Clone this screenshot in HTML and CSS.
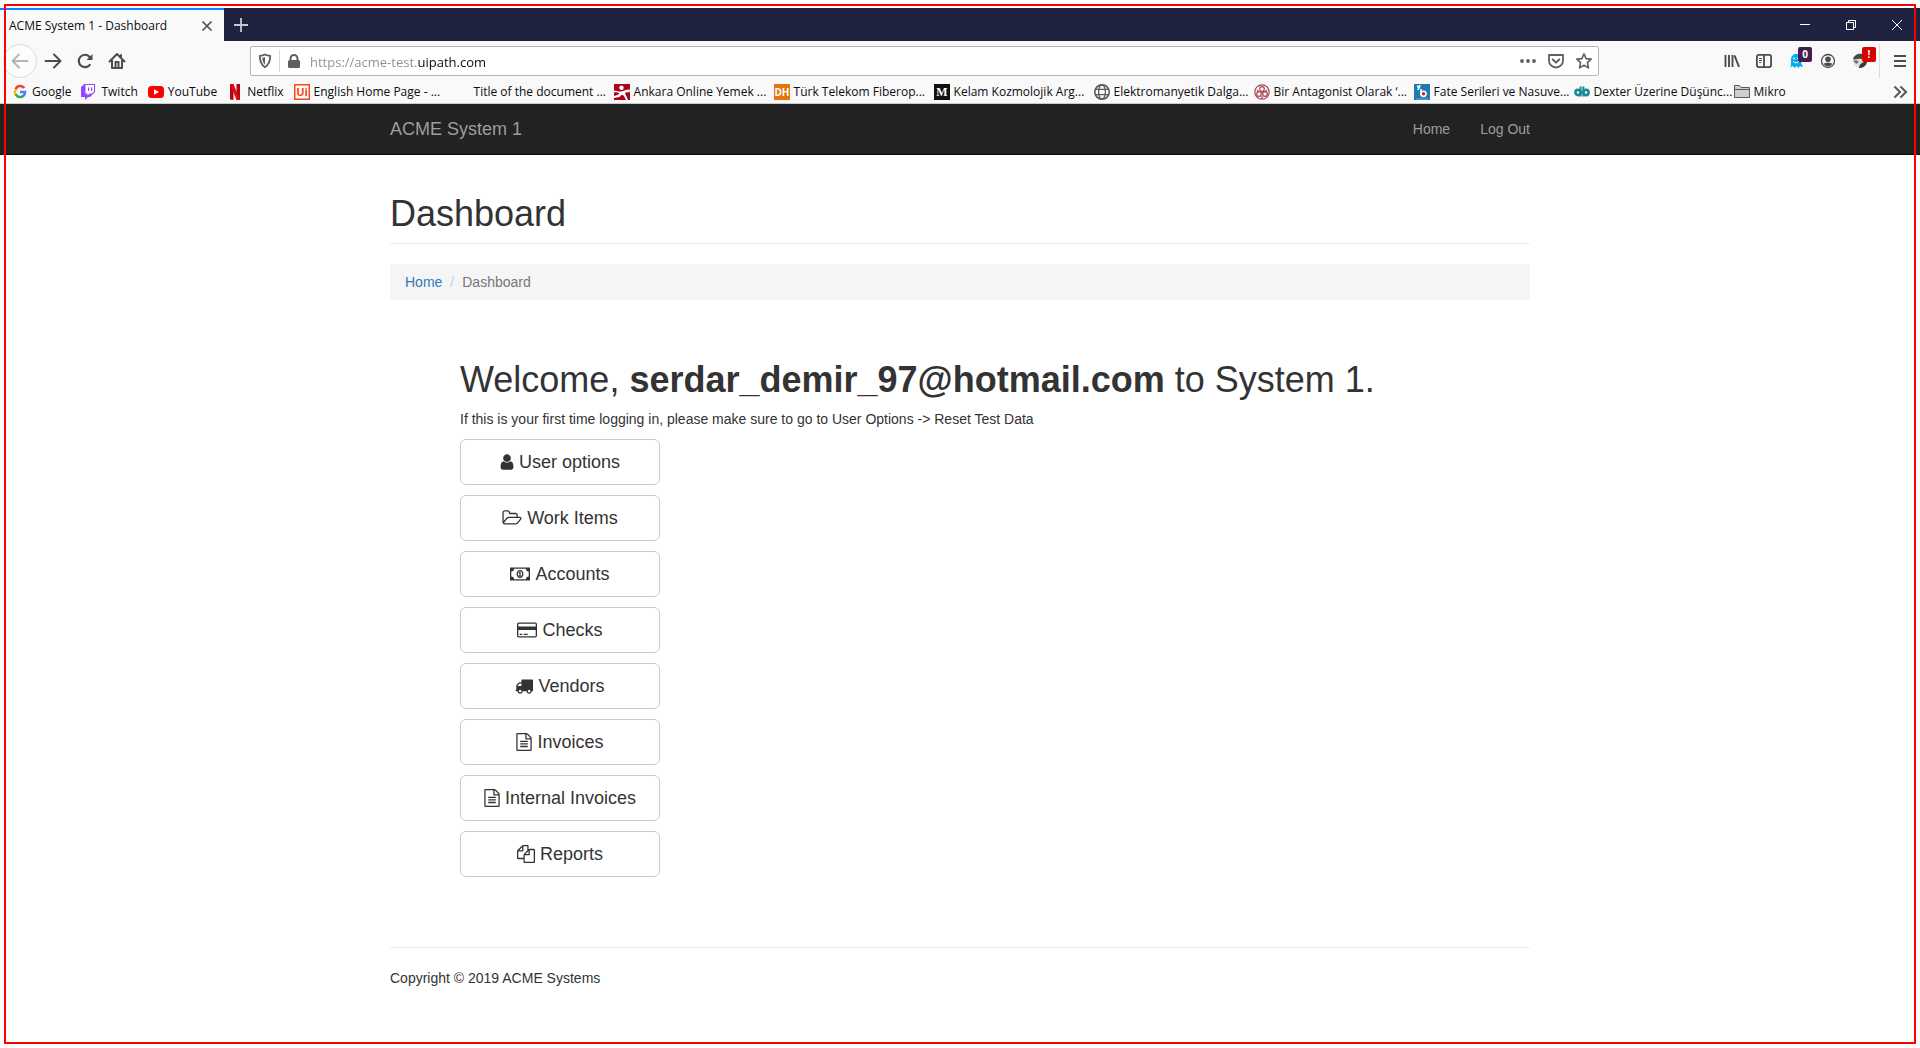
FILE: index.html
```html
<!DOCTYPE html>
<html lang="en">
<head>
<meta charset="utf-8">
<title>ACME System 1 - Dashboard</title>
<link rel="stylesheet" href="styles.css">
</head>
<body>
<div class="browser">
  <div class="tab-strip">
    <div class="tab">
      <span class="tab-title">ACME System 1 - Dashboard</span>
      <button class="icon-btn" aria-label="Close tab"><svg width="16" height="16" viewBox="0 0 16 16" fill="none" stroke="#4c4c4f" stroke-width="1.6"><path d="M3.5 3.5l9 9M12.500 3.500l-9 9"/></svg></button>
    </div>
    <button class="new-tab" aria-label="New tab"><svg width="16" height="16" viewBox="0 0 16 16" fill="none" stroke="#c9c9d2" stroke-width="1.8"><path d="M8 1v14M1 8h14"/></svg></button>
    <div class="window-controls">
      <button class="win-btn" aria-label="Minimize"><svg width="12" height="12" viewBox="0 0 12 12" stroke="#fff"><path d="M1 5.500h10"/></svg></button>
      <button class="win-btn" aria-label="Restore"><svg width="12" height="12" viewBox="0 0 12 12" fill="none" stroke="#fff"><path d="M1.500 3.500h7v7h-7zM3.500 3.500v-2h7v7h-2"/></svg></button>
      <button class="win-btn" aria-label="Close"><svg width="12" height="12" viewBox="0 0 12 12" fill="none" stroke="#fff"><path d="M1 1l10 10M11 1L1 11"/></svg></button>
    </div>
  </div>

  <div class="toolbar">
    <div class="nav-buttons">
      <button class="back" aria-label="Back" disabled><svg width="18" height="18" viewBox="0 0 18 18" fill="none" stroke="#b5b5b7" stroke-width="2" stroke-linecap="round" stroke-linejoin="round"><path d="M16.500 9h-15M8 2.500L1.500 9 8 15.500"/></svg></button>
      <button class="tool" aria-label="Forward"><svg width="18" height="18" viewBox="0 0 18 18" fill="none" stroke="#4c4c4f" stroke-width="2" stroke-linecap="round" stroke-linejoin="round"><path d="M1.500 9h15M10 2.500L16.500 9 10 15.500"/></svg></button>
      <button class="tool" aria-label="Reload"><svg width="16" height="16" viewBox="0 0 16 16" fill="none" stroke="#4c4c4f" stroke-width="2.200"><path d="M13.300 11.200A6.200 6.200 0 1 1 12.500 3.700L14 5.500"/><path d="M15.500 1v6h-6z" fill="#4c4c4f" stroke="none"/></svg></button>
      <button class="tool" aria-label="Home"><svg width="18" height="18" viewBox="0 0 18 18" fill="none" stroke="#4c4c4f" stroke-width="2" stroke-linejoin="round" stroke-linecap="round"><path d="M1.500 9.500L9 2l7.500 7.500M4 8v8h10V8M13 3v3"/><path d="M7.500 15v-5h3v5" /></svg></button>
    </div>
    <div class="url-bar">
      <button class="url-icon shield" aria-label="Tracking protection"><svg width="16" height="16" viewBox="0 0 16 16" fill="none" stroke="#5f5f61" stroke-width="1.800"><path d="M8 1.500c2 1 3.500 1.200 5.200 1.300 0 5-.8 8.700-5.200 11.400C3.600 11.500 2.800 7.800 2.800 2.800 4.500 2.700 6 2.500 8 1.500z" stroke-linejoin="round"/><path d="M8 4v7.800C6 10 5.500 8 5.300 4.800c1-.1 1.900-.3 2.700-.8z" fill="#5f5f61" stroke="none"/></svg></button>
      <button class="url-icon" aria-label="Site information"><svg width="16" height="16" viewBox="0 0 16 16" fill="#5f5f61"><rect x="2" y="7" width="12" height="8" rx="1.500"/><path d="M4.500 8V5.500a3.500 3.500 0 0 1 7 0V8" fill="none" stroke="#5f5f61" stroke-width="2"/></svg></button>
      <input class="url" type="text" aria-label="Address" value="https://acme-test.uipath.com">
      <button class="url-icon" aria-label="Page actions"><svg width="16" height="16" viewBox="0 0 16 16" fill="#5f5f61"><circle cx="2" cy="8" r="1.900"/><circle cx="8" cy="8" r="1.900"/><circle cx="14" cy="8" r="1.900"/></svg></button>
      <button class="url-icon" aria-label="Save to Pocket"><svg width="16" height="16" viewBox="0 0 16 16" fill="none" stroke="#5f5f61" stroke-width="1.800" stroke-linejoin="round" stroke-linecap="round"><path d="M1 2h14v5.500a7 7 0 0 1-14 0z"/><path d="M4.800 6.500L8 9.600l3.200-3.100" stroke-width="2"/></svg></button>
      <button class="url-icon" aria-label="Bookmark this page"><svg width="16" height="16" viewBox="0 0 16 16" fill="none" stroke="#5f5f61" stroke-width="1.600" stroke-linejoin="round"><path d="M8 .9l2.100 4.700 5.100.5-3.800 3.500 1.100 5.300L8 12.200l-4.500 2.700 1.100-5.300L.8 6.100l5.100-.5z"/></svg></button>
    </div>
    <div class="extensions">
      <button class="tool" aria-label="Library"><svg width="16" height="16" viewBox="0 0 16 16" fill="none" stroke="#4c4c4f" stroke-width="1.900"><path d="M1.500 2v12M5 2v12M8.500 2v12M10.500 2.300l4.500 11.500"/></svg></button>
      <button class="tool" aria-label="Sidebars"><svg width="16" height="16" viewBox="0 0 16 16" fill="none" stroke="#4c4c4f" stroke-width="1.800"><rect x=".9" y="1.900" width="14.200" height="12.200" rx="2"/><path d="M8 2v12"/><path d="M3 5.500h3M3 7.500h3M3 9.500h2" stroke-width="1"/></svg></button>
      <button class="tool" aria-label="Ghostery"><svg width="16" height="16" viewBox="0 0 16 16"><path d="M3 14V6.500C3 3.500 5 1 8 1s5 2.500 5 5.500c0 3 .5 5 2 7.500-1.500 0-2-.5-3-1l-1.500 2L8.500 13 6.500 15 5 13l-4 2c1.500-1 2-1.500 2-3z" fill="#00aef0"/><circle cx="6.200" cy="5.500" r="1" fill="#fff"/><circle cx="10" cy="5.500" r="1" fill="#fff"/><path d="M5.200 8a3 3 0 0 0 5.600 0" fill="none" stroke="#fff"/></svg><span class="badge badge-count">0</span></button>
      <button class="tool" aria-label="Account"><svg width="16" height="16" viewBox="0 0 16 16"><circle cx="8" cy="8" r="6.500" fill="none" stroke="#4c4c4f" stroke-width="1.300"/><circle cx="8" cy="6.200" r="2.800" fill="#4c4c4f"/><path d="M3.500 10.500c2 0 2.500-1 4.500-1s2.500 1 4.500 1c-1 2-2.500 2.800-4.500 2.800s-3.500-.8-4.500-2.800z" fill="#4c4c4f"/></svg></button>
      <button class="tool" aria-label="Greasemonkey"><svg width="16" height="16" viewBox="0 0 16 16"><circle cx="8" cy="8" r="7" fill="#dededc"/><path d="M1 6C2 2 6 0 10 1c4 1 6 5 5 8-3-2-6-4-9-3-2 0-4 1-5 0z" fill="#4a4a48"/><path d="M15 9c-1 4-4 6-8 6 0-3 2-5 5-6z" fill="#3a3a38"/><path d="M1 8c2-1 4-1 6 1l-3 2c-1-2-2-2-3-3z" fill="#77776f"/></svg><span class="badge badge-alert">!</span></button>
      <button class="menu-btn" aria-label="Menu"><svg width="16" height="16" viewBox="0 0 16 16" stroke="#4c4c4f" stroke-width="2"><path d="M2 3h12M2 8h12M2 13h12"/></svg></button>
    </div>
  </div>

  <nav class="bookmarks" aria-label="Bookmarks">
    <a href="#" class="bm"><svg width="16" height="16" viewBox="0 0 16 16" fill="none" stroke-width="2.500"><path d="M12.300 4A5 5 0 0 0 3.600 5.300" stroke="#ea4335"/><path d="M3.600 5.300a5 5 0 0 0 0 5" stroke="#fbbc05"/><path d="M3.600 10.300a5 5 0 0 0 7.800 1.500" stroke="#34a853"/><path d="M11.200 12A5 5 0 0 0 13 8H8" stroke="#4285f4"/></svg>Google</a>
    <a href="#" class="bm"><svg width="16" height="16" viewBox="0 0 16 16"><path d="M3.500 0L0 3v10h4v3l3-3h2l5-5V0z" fill="#9146ff"/><path d="M4.500 1H13v6.500L11 9.500H8.500l-2 2v-2h-2z" fill="#fff"/><path d="M7 3.500h1.200V7H7zM10 3.500h1.200V7H10z" fill="#9146ff"/></svg>Twitch</a>
    <a href="#" class="bm"><svg width="16" height="16" viewBox="0 0 16 16"><rect y="2" width="16" height="12" rx="3.500" fill="#f00"/><path d="M6 5.200v5.600L11 8z" fill="#fff"/></svg>YouTube</a>
    <a href="#" class="bm"><svg width="16" height="16" viewBox="0 0 16 16"><path d="M3 0h3.500v16L3 15.500zM9.500 0H13v16l-3.500-.5z" fill="#b1060f"/><path d="M3 0h3.500L13 16H9.500z" fill="#e50914"/></svg>Netflix</a>
    <a href="#" class="bm bm-long"><svg class="logo-ui" width="16" height="16" viewBox="0 0 16 16"><rect width="16" height="16" fill="#fa4616"/><rect x="1.500" y="1.500" width="13" height="13" fill="#fff"/><text x="8" y="12" text-anchor="middle" font-size="11" font-weight="700" fill="#fa4616">Ui</text></svg>English Home Page - ...</a>
    <a href="#" class="bm bm-long"><svg width="16" height="16" viewBox="0 0 16 16"></svg>Title of the document ...</a>
    <a href="#" class="bm bm-long"><svg width="16" height="16" viewBox="0 0 16 16"><rect width="16" height="16" fill="#a9041c"/><circle cx="7.500" cy="3.800" r="2.200" fill="#fff"/><path d="M0 7c3-1 4 1 7 .5S13 5 16 5.500l-.5 3C13 8 12 8.500 11 9l1 2.500L14 16h-2L10 12 8 10.500 5.500 13 0 14v-2l4-1.200L5.500 9C3.500 9 2 8 0 8.500z" fill="#fff"/></svg>Ankara Online Yemek ...</a>
    <a href="#" class="bm bm-long"><svg class="logo-ui" width="16" height="16" viewBox="0 0 16 16"><rect width="16" height="16" fill="#e2770f"/><text x="8" y="12" text-anchor="middle" font-size="10" font-weight="700" fill="#fff">DH</text></svg>Türk Telekom Fiberop...</a>
    <a href="#" class="bm bm-long"><svg class="logo-serif" width="16" height="16" viewBox="0 0 16 16"><rect width="16" height="16" fill="#12110f"/><text x="8" y="12" text-anchor="middle" font-size="12" font-weight="700" fill="#fff">M</text></svg>Kelam Kozmolojik Arg...</a>
    <a href="#" class="bm bm-long"><svg width="16" height="16" viewBox="0 0 16 16" fill="none" stroke="#57585a" stroke-width="1.300"><circle cx="8" cy="8" r="7.200" stroke-width="1.600"/><ellipse cx="8" cy="8" rx="3.400" ry="7.200"/><path d="M1.500 5.300h13M1.500 10.700h13"/></svg>Elektromanyetik Dalga...</a>
    <a href="#" class="bm bm-long"><svg width="16" height="16" viewBox="0 0 16 16" fill="none" stroke="#a8454c" stroke-width="1.200"><circle cx="8" cy="8" r="7.200"/><circle cx="8" cy="5" r="2.300"/><circle cx="5" cy="10" r="2.300"/><circle cx="11" cy="10" r="2.300"/><path d="M8 7v2M3 6l2 2M13 6l-2 2M8 12v3"/></svg>Bir Antagonist Olarak ‘...</a>
    <a href="#" class="bm bm-long"><svg width="16" height="16" viewBox="0 0 16 16"><rect width="16" height="16" fill="#1f7ab2"/><path d="M3 2l3 2M6 1L4 6M7 5v6" stroke="#fff" stroke-width="1.600"/><circle cx="9.500" cy="9.800" r="2.600" fill="#b33" stroke="#fff" stroke-width="1.600"/><path d="M2 15h12" stroke="#6babcf"/></svg>Fate Serileri ve Nasuve...</a>
    <a href="#" class="bm bm-long"><svg width="16" height="16" viewBox="0 0 16 16" fill="none" stroke="#178a98" stroke-width="2.600"><circle cx="4" cy="8.500" r="2.600"/><circle cx="12" cy="8.500" r="2.600"/><path d="M6.600 2.500v10M9.400 2.500v10" stroke-width="2"/></svg>Dexter Üzerine Düşünc...</a>
    <a href="#" class="bm"><svg width="16" height="16" viewBox="0 0 16 16" fill="#cfcfd0" stroke="#58585a"><path d="M.5 13.500v-12h5l1.500 2h8.500v10z"/><path d="M.5 5.500h15"/></svg>Mikro</a>
    <button class="more" aria-label="More bookmarks"><svg width="16" height="16" viewBox="0 0 16 16" fill="none" stroke="#58585a" stroke-width="2"><path d="M2.500 2.500L8 8l-5.500 5.500M8.500 2.500L14 8l-5.500 5.500"/></svg></button>
  </nav>
</div>

<header class="navbar">
  <div class="container navbar-inner">
    <a href="#" class="brand">ACME System 1</a>
    <nav class="nav-links"><a href="#">Home</a><a href="#">Log Out</a></nav>
  </div>
</header>

<main class="container">
  <div class="page-header"><h1>Dashboard</h1></div>
  <ol class="breadcrumb"><li><a href="#">Home</a></li><li>Dashboard</li></ol>
  <section class="welcome">
    <h1>Welcome, <b>serdar_demir_97@hotmail.com</b> to System 1.</h1>
    <p>If this is your first time logging in, please make sure to go to User Options -&gt; Reset Test Data</p>
    <div class="actions">
      <button class="btn"><svg width="14" height="18" viewBox="256 0 1280 1792"><path d="M1536 1399q0 109-62.500 187t-150.500 78h-854q-88 0-150.500-78t-62.500-187q0-85 8.500-160.500t31.500-152 58.500-131 94-89 134.500-34.500q131 128 313 128t313-128q76 0 134.500 34.500t94 89 58.500 131 31.500 152 8.500 160.500zm-256-887q0 159-112.500 271.500t-271.500 112.500-271.500-112.500-112.500-271.500 112.500-271.500 271.500-112.500 271.500 112.500 112.500 271.500z"/></svg>User options</button>
      <button class="btn"><svg width="20" height="18" viewBox="64 0 1909 1792"><path d="M1845 931q0-35-53-35h-1088q-40 0-85.500 21.500t-71.500 52.500l-294 363q-18 24-18 40 0 35 53 35h1088q40 0 86-22t71-53l294-363q18-22 18-39zm-1141-163h768v-160q0-40-28-68t-68-28h-576q-40 0-68-28t-28-68v-64q0-40-28-68t-68-28h-320q-40 0-68 28t-28 68v853l256-315q44-53 116-87.500t140-34.500zm1269 163q0 62-46 120l-295 363q-43 53-116 87.500t-140 34.500h-1088q-92 0-158-66t-66-158v-960q0-92 66-158t158-66h320q92 0 158 66t66 158v32h544q92 0 158 66t66 158v160h192q54 0 99 24.500t67 70.500q15 32 15 68z"/></svg>Work Items</button>
      <button class="btn"><svg width="20" height="18" viewBox="0 0 20 18"><path fill-rule="evenodd" d="M0 2.500h20v13H0zM4 3.800A2.700 2.700 0 0 1 1.300 6.500v5A2.700 2.700 0 0 1 4 14.200h12a2.700 2.700 0 0 1 2.700-2.700v-5A2.700 2.700 0 0 1 16 3.800zM10 5c2.200 0 3.400 1.800 3.400 4s-1.200 4-3.400 4-3.400-1.800-3.400-4S7.800 5 10 5zM10 6.200C8.600 6.200 7.900 7.500 7.900 9s.7 2.800 2.100 2.800 2.100-1.300 2.100-2.800-.7-2.800-2.100-2.800z"/><path d="M9.600 6.800h1v3.700h.9v.9h-3v-.9h.9V8.200l-.7.400-.4-.7z"/></svg>Accounts</button>
      <button class="btn"><svg width="20" height="18" viewBox="0 0 20 18"><path fill-rule="evenodd" d="M1.700 1.500h16.600q1.700 0 1.700 1.700v11.600q0 1.700-1.700 1.700H1.700Q0 16.500 0 14.800V3.200Q0 1.500 1.700 1.500zM1.700 2.800q-.4 0-.4.400V5.500h17.400V3.200q0-.4-.4-.4zM1.300 9v5.800q0 .4.400.4h16.600q.4 0 .4-.4V9zM2.700 12.700h2.600v1.200H2.700zM6.700 12.700h4v1.200h-4z"/></svg>Checks</button>
      <button class="btn"><svg width="18" height="18" viewBox="0 0 1792 1792"><path d="M640 1408q0-52-38-90t-90-38-90 38-38 90 38 90 90 38 90-38 38-90zm-384-512h384v-256h-158q-13 0-22 9l-195 195q-9 9-9 22v30zm1280 512q0-52-38-90t-90-38-90 38-38 90 38 90 90 38 90-38 38-90zm256-1088v1024q0 15-4 26.500t-13.500 18.500-16.500 11.500-23.500 6-22.500 2-25.500 0-22.500-.5q0 106-75 181t-181 75-181-75-75-181h-384q0 106-75 181t-181 75-181-75-75-181h-64q-3 0-22.500.5t-25.500 0-22.500-2-23.500-6-16.500-11.500-13.500-18.500-4-26.500q0-26 19-45t45-19v-320q0-8-.5-35t0-38 2.500-34.500 6.500-37 14-30.500 22.500-30l198-198q19-19 50.500-32t58.500-13h160v-192q0-26 19-45t45-19h1024q26 0 45 19t19 45z"/></svg>Vendors</button>
      <button class="btn"><svg width="16" height="18" viewBox="128 0 1536 1792"><path d="M1596 380q28 28 48 76t20 88v1152q0 40-28 68t-68 28h-1344q-40 0-68-28t-28-68v-1600q0-40 28-68t68-28h896q40 0 88 20t76 48zm-444-244v376h376q-10-29-22-41l-313-313q-12-12-41-22zm384 1528v-1024h-416q-40 0-68-28t-28-68v-416h-768v1536h1280zm-1024-864q0-14 9-23t23-9h704q14 0 23 9t9 23v64q0 14-9 23t-23 9h-704q-14 0-23-9t-9-23v-64zm736 224q14 0 23 9t9 23v64q0 14-9 23t-23 9h-704q-14 0-23-9t-9-23v-64q0-14 9-23t23-9h704zm0 256q14 0 23 9t9 23v64q0 14-9 23t-23 9h-704q-14 0-23-9t-9-23v-64q0-14 9-23t23-9h704z"/></svg>Invoices</button>
      <button class="btn"><svg width="16" height="18" viewBox="128 0 1536 1792"><path d="M1596 380q28 28 48 76t20 88v1152q0 40-28 68t-68 28h-1344q-40 0-68-28t-28-68v-1600q0-40 28-68t68-28h896q40 0 88 20t76 48zm-444-244v376h376q-10-29-22-41l-313-313q-12-12-41-22zm384 1528v-1024h-416q-40 0-68-28t-28-68v-416h-768v1536h1280zm-1024-864q0-14 9-23t23-9h704q14 0 23 9t9 23v64q0 14-9 23t-23 9h-704q-14 0-23-9t-9-23v-64zm736 224q14 0 23 9t9 23v64q0 14-9 23t-23 9h-704q-14 0-23-9t-9-23v-64q0-14 9-23t23-9h704zm0 256q14 0 23 9t9 23v64q0 14-9 23t-23 9h-704q-14 0-23-9t-9-23v-64q0-14 9-23t23-9h704z"/></svg>Internal Invoices</button>
      <button class="btn"><svg width="18" height="18" viewBox="0 0 1792 1792"><path d="M1696 384q40 0 68 28t28 68v1216q0 40-28 68t-68 28h-960q-40 0-68-28t-28-68v-288h-544q-40 0-68-28t-28-68v-672q0-40 20-88t48-76l408-408q28-28 76-48t88-20h416q40 0 68 28t28 68v328q68-40 128-40h416zm-544 213l-299 299h299v-299zm-640-384l-299 299h299v-299zm196 647l316-316v-416h-384v416q0 40-28 68t-68 28h-416v640h512v-256q0-40 20-88t48-76zm956 804v-1152h-384v416q0 40-28 68t-68 28h-416v640h896z"/></svg>Reports</button>
    </div>
  </section>
  <footer class="footer"><p>Copyright © 2019 ACME Systems</p></footer>
</main>
<div class="frame"></div>
</body>
</html>
```
FILE: styles.css
```css
* { box-sizing: border-box; }
body {
  margin: 0;
  padding-top: 8px;
  background: #fff;
  color: #333;
  font: 14px/20px "Liberation Sans", Arial, sans-serif;
}
a { text-decoration: none; }
button {
  display: flex;
  align-items: center;
  justify-content: center;
  padding: 0;
  border: 0;
  background: none;
  color: inherit;
  font: inherit;
}
svg { display: block; flex: none; }
h1, p, ol { margin: 0; }

.frame {
  position: fixed;
  inset: 4px;
  border: 2px solid #f00;
  pointer-events: none;
}

/* Browser window */
.browser {
  background: #f9f9fa;
  border-bottom: 1px solid #ccc;
  color: #0c0c0d;
  font: 12px/16px "Open Sans", "Noto Sans", sans-serif;
}
.tab-strip {
  display: flex;
  height: 33px;
  background: #202340;
}
.tab {
  display: flex;
  align-items: center;
  justify-content: space-between;
  width: 224px;
  padding: 0 9px;
  border-top: 2px solid #0a84ff;
  background: #f9f9fa;
}
.new-tab { width: 34px; }
.window-controls {
  display: flex;
  margin-left: auto;
}
.win-btn { width: 46px; }

.toolbar {
  display: flex;
  align-items: center;
  height: 40px;
}
.nav-buttons {
  display: flex;
  align-items: center;
  width: 250px;
  padding-left: 3px;
}
.back {
  width: 34px;
  height: 34px;
  border: 1px solid #dcdcdd;
  border-radius: 50%;
  background: #fcfcfc;
}
.tool {
  position: relative;
  width: 32px;
  height: 32px;
}
.url-bar {
  display: flex;
  flex: 1;
  align-items: center;
  height: 30px;
  border: 1px solid #b6b6b8;
  border-radius: 2px;
  background: #fff;
}
.url-icon { width: 28px; height: 22px; }
.shield { width: 29px; border-right: 1px solid #d7d7db; }
.url {
  flex: 1;
  min-width: 0;
  height: 26px;
  padding: 2px 0 0 2px;
  border: 0;
  outline: 0;
  background: linear-gradient(90deg, #8d8d8f 110px, #0c0c0d 110px);
  background-clip: text;
  -webkit-text-fill-color: transparent;
  font: 13px/24px "Open Sans", "Noto Sans", sans-serif;
}
.extensions {
  display: flex;
  align-items: center;
  margin-left: 117px;
}
.badge {
  position: absolute;
  top: 2px;
  right: 0;
  width: 14px;
  border-radius: 2px;
  color: #fff;
  font-size: 10px;
  font-weight: 700;
  line-height: 15px;
  text-align: center;
}
.badge-count { background: #431d4b; }
.badge-alert { background: #d90000; }
.menu-btn {
  width: 41px;
  height: 34px;
  margin-left: 3px;
  border-left: 1px solid #dcdcdd;
}

.bookmarks {
  display: flex;
  align-items: center;
  height: 22px;
  padding: 0 12px 0 12px;
}
.bm {
  display: flex;
  align-items: center;
  gap: 4px;
  padding-right: 10px;
  color: #0c0c0d;
  white-space: nowrap;
}
.bm-long { width: 160px; padding-right: 0; }
.logo-ui { font-family: "Open Sans", sans-serif; }
.logo-serif { font-family: "Liberation Serif", serif; }
.more { margin-left: auto; }

/* ACME page */
.container {
  width: 100%;
  max-width: 1140px;
  margin: 0 auto;
}
.navbar {
  background: #222;
  border-bottom: 1px solid #080808;
}
.navbar-inner {
  display: flex;
  align-items: center;
  justify-content: space-between;
  height: 50px;
}
.brand { color: #9d9d9d; font-size: 18px; }
.nav-links { display: flex; gap: 30px; }
.nav-links a { color: #9d9d9d; }

h1 {
  font-size: 36px;
  font-weight: 400;
  line-height: 40px;
}
.page-header {
  margin: 39px 0 20px;
  padding-bottom: 9px;
  border-bottom: 1px solid #eee;
}
.breadcrumb {
  display: flex;
  padding: 8px 15px;
  border-radius: 4px;
  background: #f5f5f5;
  color: #777;
  list-style: none;
}
.breadcrumb a { color: #337ab7; }
.breadcrumb li + li::before {
  content: "/";
  padding: 0 8px;
  color: #ccc;
}
.welcome { padding: 60px 70px 70px; }
.welcome p { margin: 9px 0 10px; }
.actions {
  display: flex;
  flex-direction: column;
  gap: 10px;
  width: 200px;
}
.btn {
  gap: 5px;
  height: 46px;
  border: 1px solid #ccc;
  border-radius: 6px;
  background: #fff;
  font-size: 18px;
}
.btn svg { fill: #333; }
.footer {
  padding: 20px 0;
  border-top: 1px solid #eee;
}
```
